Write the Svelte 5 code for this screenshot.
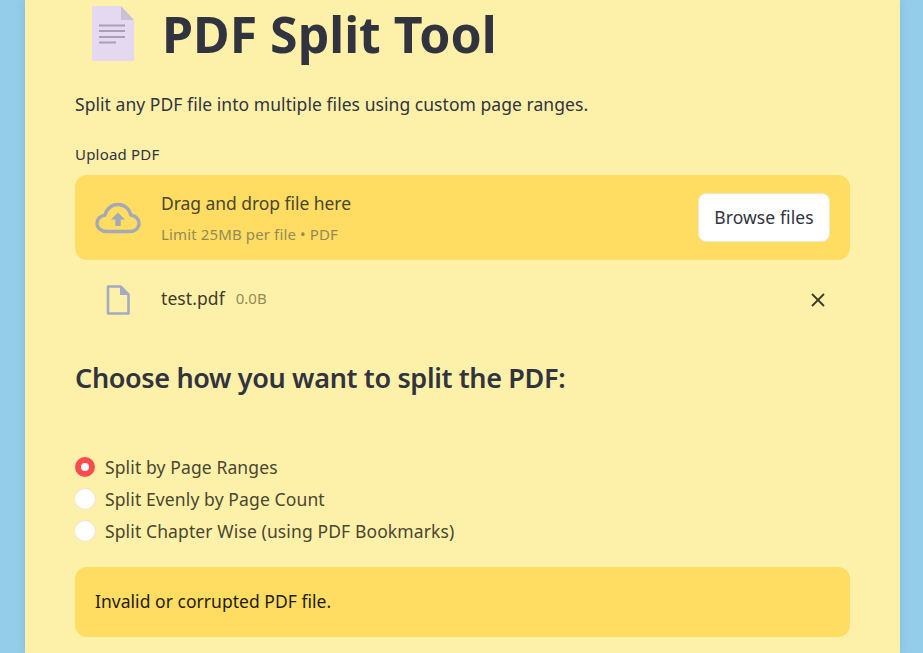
<script>
  const options = [
    { label: "Split by Page Ranges", checked: true },
    { label: "Split Evenly by Page Count", checked: false },
    { label: "Split Chapter Wise (using PDF Bookmarks)", checked: false }
  ];
</script>

<div class="page">
  <main class="card">
    <header class="title-row">
      <svg class="doc-emoji" viewBox="0 0 42 56" width="42" height="56" aria-hidden="true">
        <path d="M0 1h29l13 14v41H0z" fill="#e4d9f0" />
        <path d="M29 1l13 14H29z" fill="#c9c2d4" />
        <path d="M7 20.500h26M7 26h26M7 32h26M7 37.500h17" stroke="#a79fb4" stroke-width="1.800" fill="none" />
      </svg>
      <h1>PDF Split Tool</h1>
    </header>

    <p class="intro">Split any PDF file into multiple files using custom page ranges.</p>

    <div class="upload-label">Upload PDF</div>
    <section class="dropzone">
      <svg class="cloud" viewBox="0 0 46 32" width="46" height="32" aria-hidden="true">
        <path d="M12 29.500C6 29.500 2 26 2 21.500c0-4.500 3.500-8 8-8.300C11.500 6.500 17 2.500 23 2.500c6.500 0 11.500 4.500 12.700 10.500C40.500 13.500 44 17 44 21.500c0 4.500-4 8-9.500 8z" fill="none" stroke="#a4a9b8" stroke-width="3.400" stroke-linejoin="round" />
        <path d="M23 10.500l7 7h-4.300v6.500h-5.400v-6.500H16z" fill="#a4a9b8" />
      </svg>
      <div class="drop-text">
        <div class="drop-main">Drag and drop file here</div>
        <div class="drop-sub">Limit 25MB per file • PDF</div>
      </div>
      <button class="browse">Browse files</button>
    </section>

    <div class="file-row">
      <svg class="file-icon" viewBox="0 0 24 30" width="24" height="30" aria-hidden="true">
        <path d="M2 1.500h12.500L22.500 9.500V28.500H2z" fill="none" stroke="#a4a9c4" stroke-width="2.600" stroke-linejoin="round" />
        <path d="M14 1.500v8.500h8.500z" fill="#a4a9c4" />
      </svg>
      <span class="file-name">test.pdf</span>
      <span class="file-size">0.0B</span>
      <svg class="close" viewBox="0 0 16 16" width="16" height="16" aria-hidden="true">
        <path d="M2 2l12 12M14 2L2 14" stroke="#3d3a2a" stroke-width="1.800" fill="none" />
      </svg>
    </div>

    <h2>Choose how you want to split the PDF:</h2>

    <div class="radios">
      {#each options as opt}
        <div class="radio-row">
          <span class="radio" class:checked={opt.checked}></span>
          <span>{opt.label}</span>
        </div>
      {/each}
    </div>

    <div class="alert">Invalid or corrupted PDF file.</div>
  </main>
</div>

<style>
  :global(body) {
    margin: 0;
    background: #93cdea;
    font-family: "Noto Sans", "Open Sans", sans-serif;
    color: #31333f;
  }

  .page {
    height: 653px;
    overflow: hidden;
    padding: 0 23px 0 25px;
  }

  .card {
    background: #fdf1a9;
    height: 100%;
    padding: 0 50px;
    box-sizing: border-box;
    box-shadow: 0 0 10px rgba(0, 0, 0, 0.08);
  }

  .title-row {
    display: flex;
    align-items: center;
    height: 68px;
  }

  .doc-emoji {
    margin-left: 17px;
    margin-right: 28px;
    margin-top: -2px;
  }

  h1 {
    margin: 0;
    font-size: 50px;
    font-weight: 700;
    line-height: 68px;
  }

  .intro {
    margin: 23px 0 0;
    font-size: 17.500px;
    line-height: 26px;
    letter-spacing: 0.050px;
  }

  .upload-label {
    margin-top: 27px;
    font-size: 15px;
    line-height: 20px;
    letter-spacing: 0.200px;
  }

  .dropzone {
    margin-top: 11px;
    height: 85px;
    background: #ffdd63;
    border-radius: 12px;
    display: flex;
    align-items: center;
    padding: 0 20px;
  }

  .cloud {
    margin-right: 20px;
  }

  .drop-text {
    flex: 1;
  }

  .drop-main {
    font-size: 17.500px;
    line-height: 26px;
    letter-spacing: -0.050px;
    color: #4a4630;
    margin-top: -2px;
  }

  .drop-sub {
    margin-top: 8px;
    font-size: 15px;
    line-height: 20px;
    letter-spacing: 0.130px;
    color: #948a55;
  }

  .browse {
    width: 132px;
    height: 49px;
    padding-bottom: 3px;
    background: #fff;
    border: 1px solid #eee7c8;
    border-radius: 8px;
    font: inherit;
    font-size: 17.500px;
    letter-spacing: 0.100px;
    color: #31333f;
  }

  .file-row {
    display: flex;
    align-items: center;
    height: 79px;
    padding-left: 31px;
  }

  .file-icon {
    margin-right: 31px;
  }

  .file-name {
    font-size: 17.500px;
    letter-spacing: 0.080px;
    color: #3d3a2a;
    margin-top: -3px;
  }

  .file-size {
    margin-left: 11px;
    font-size: 15px;
    color: #948a55;
    margin-top: -3px;
  }

  .close {
    margin-left: auto;
    margin-right: 24px;
  }

  h2 {
    margin: 20px 0 0;
    font-size: 27px;
    font-weight: 600;
    line-height: 38px;
    letter-spacing: -0.350px;
  }

  .radios {
    margin-top: 54px;
    display: flex;
    flex-direction: column;
    font-size: 17.500px;
    letter-spacing: 0.120px;
    color: #4a4630;
  }

  .radio-row {
    display: flex;
    align-items: center;
    height: 32px;
    gap: 10px;
  }

  .radio {
    width: 20px;
    height: 20px;
    border-radius: 50%;
    background: #fff;
    box-shadow: 0 0 0 1px #eee7c8;
    box-sizing: border-box;
  }

  .radio.checked {
    border: 6px solid #ff4b4b;
    box-shadow: none;
  }

  .alert {
    margin-top: 20px;
    height: 70px;
    padding: 0 20px 2px;
    box-sizing: border-box;
    background: #ffdd63;
    border-radius: 12px;
    display: flex;
    align-items: center;
    font-size: 17.500px;
    letter-spacing: 0.030px;
    color: #1f1c0c;
  }
</style>
